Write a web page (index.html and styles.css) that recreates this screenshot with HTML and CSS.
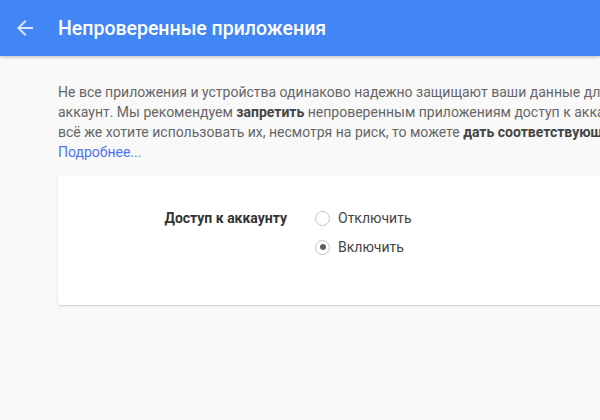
FILE: index.html
```html
<!DOCTYPE html>
<html lang="ru">
<head>
<meta charset="utf-8">
<link rel="stylesheet" href="styles.css">
</head>
<body>
<header class="appbar">
  <svg class="back" width="24" height="24" viewBox="0 0 24 24"><path d="M20 11H7.83l5.59-5.59L12 4l-8 8 8 8 1.41-1.41L7.83 13H20v-2z" fill="currentColor"/></svg>
  <h1 class="title">Непроверенные приложения</h1>
</header>
<main class="content">
  <p class="intro">Не все приложения и устройства одинаково надежно защищают ваши данные для входа в<br>аккаунт. Мы рекомендуем <b>запретить</b> непроверенным приложениям доступ к аккаунту. Если вы<br>всё же хотите использовать их, несмотря на риск, то можете <b>дать соответствующее разрешение</b>.<br><a class="more" href="#">Подробнее...</a></p>
  <section class="card">
    <div class="setting">
      <div class="label">Доступ к аккаунту</div>
      <div class="options">
        <label class="option"><span class="radio"></span>Отключить</label>
        <label class="option"><span class="radio checked"></span>Включить</label>
      </div>
    </div>
  </section>
</main>
</body>
</html>
```
FILE: styles.css
```css
html, body {
  margin: 0;
  padding: 0;
}
body {
  width: 600px;
  height: 420px;
  overflow: hidden;
  background: #f9f9f9;
  font-family: Roboto, "Noto Sans", Arial, sans-serif;
}
.appbar {
  height: 56px;
  background: #4285f4;
  display: flex;
  align-items: center;
  box-shadow: 0 1px 3px rgba(0,0,0,0.25);
  position: relative;
}
.back {
  color: rgba(255,255,255,0.8);
  margin-left: 13px;
  width: 24px;
  height: 24px;
}
.title {
  margin: 0 0 0 21px;
  color: #fff;
  font-size: 19.5px;
  font-weight: 500;
}
.content {
  padding: 26px 0 0 58px;
}
.intro {
  margin: 0;
  font-size: 14px;
  line-height: 20px;
  color: #666;
  white-space: nowrap;
}
.intro b {
  color: #444;
  font-weight: 700;
}
.more {
  color: #4d73ee;
  text-decoration: none;
}
.card {
  margin-top: 13px;
  width: 600px;
  height: 130px;
  background: #fff;
  border-radius: 2px;
  box-shadow: 0 1px 2px rgba(0,0,0,0.18);
  box-sizing: border-box;
  padding-top: 33px;
}
.setting {
  display: flex;
  align-items: flex-start;
}
.label {
  width: 229px;
  text-align: right;
  font-size: 14px;
  font-weight: 700;
  color: #333;
  line-height: 20px;
}
.options {
  margin-left: 28px;
  display: flex;
  flex-direction: column;
  gap: 9px;
}
.option {
  display: flex;
  align-items: center;
  font-size: 14px;
  color: #444;
  line-height: 20px;
}
.radio {
  width: 13px;
  height: 13px;
  border: 1px solid #c4c4c4;
  border-radius: 50%;
  margin-right: 8px;
  position: relative;
  box-sizing: content-box;
}
.radio.checked::after {
  content: "";
  position: absolute;
  left: 3.5px;
  top: 3.5px;
  width: 6px;
  height: 6px;
  border-radius: 50%;
  background: #616161;
}
```
